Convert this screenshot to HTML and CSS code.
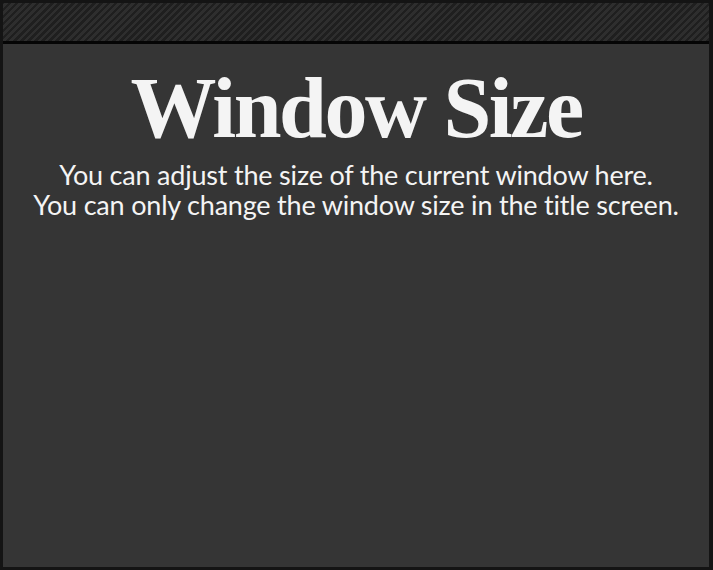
FILE: index.html
```html
<!DOCTYPE html>
<html>
<head>
<meta charset="utf-8">
<link rel="stylesheet" href="styles.css">
</head>
<body>
<div class="frame">
  <div class="header"></div>
  <div class="content">
    <h1 class="title">Window Size</h1>
    <p class="desc">You can adjust the size of the current window here.<br>You can only change the window size in the title screen.</p>
  </div>
</div>
</body>
</html>
```
FILE: styles.css
```css
html, body {
  margin: 0;
  padding: 0;
  background: #111111;
}
.frame {
  width: 713px;
  height: 570px;
  box-sizing: border-box;
  border-style: solid;
  border-color: #141414;
  border-width: 3px 4px 3px 3px;
  display: flex;
  flex-direction: column;
  background: #353535;
}
.header {
  height: 38px;
  flex: none;
  border-bottom: 3px solid #050505;
  background: repeating-linear-gradient(-45deg, #1f1f1f 0px, #1f1f1f 2.5px, #2e2e2e 2.5px, #2e2e2e 5px);
}
.content {
  flex: 1;
  display: flex;
  flex-direction: column;
  align-items: center;
  color: #f4f4f4;
}
.title {
  margin: 14px 0 0 0;
  font-family: "Liberation Serif", serif;
  font-weight: bold;
  font-size: 86px;
  letter-spacing: -2.5px;
  line-height: 100px;
}
.desc {
  margin: 2px 0 0 0;
  font-family: "Lato", sans-serif;
  font-size: 27px;
  line-height: 30px;
  text-align: center;
  letter-spacing: -0.2px;
}
```
